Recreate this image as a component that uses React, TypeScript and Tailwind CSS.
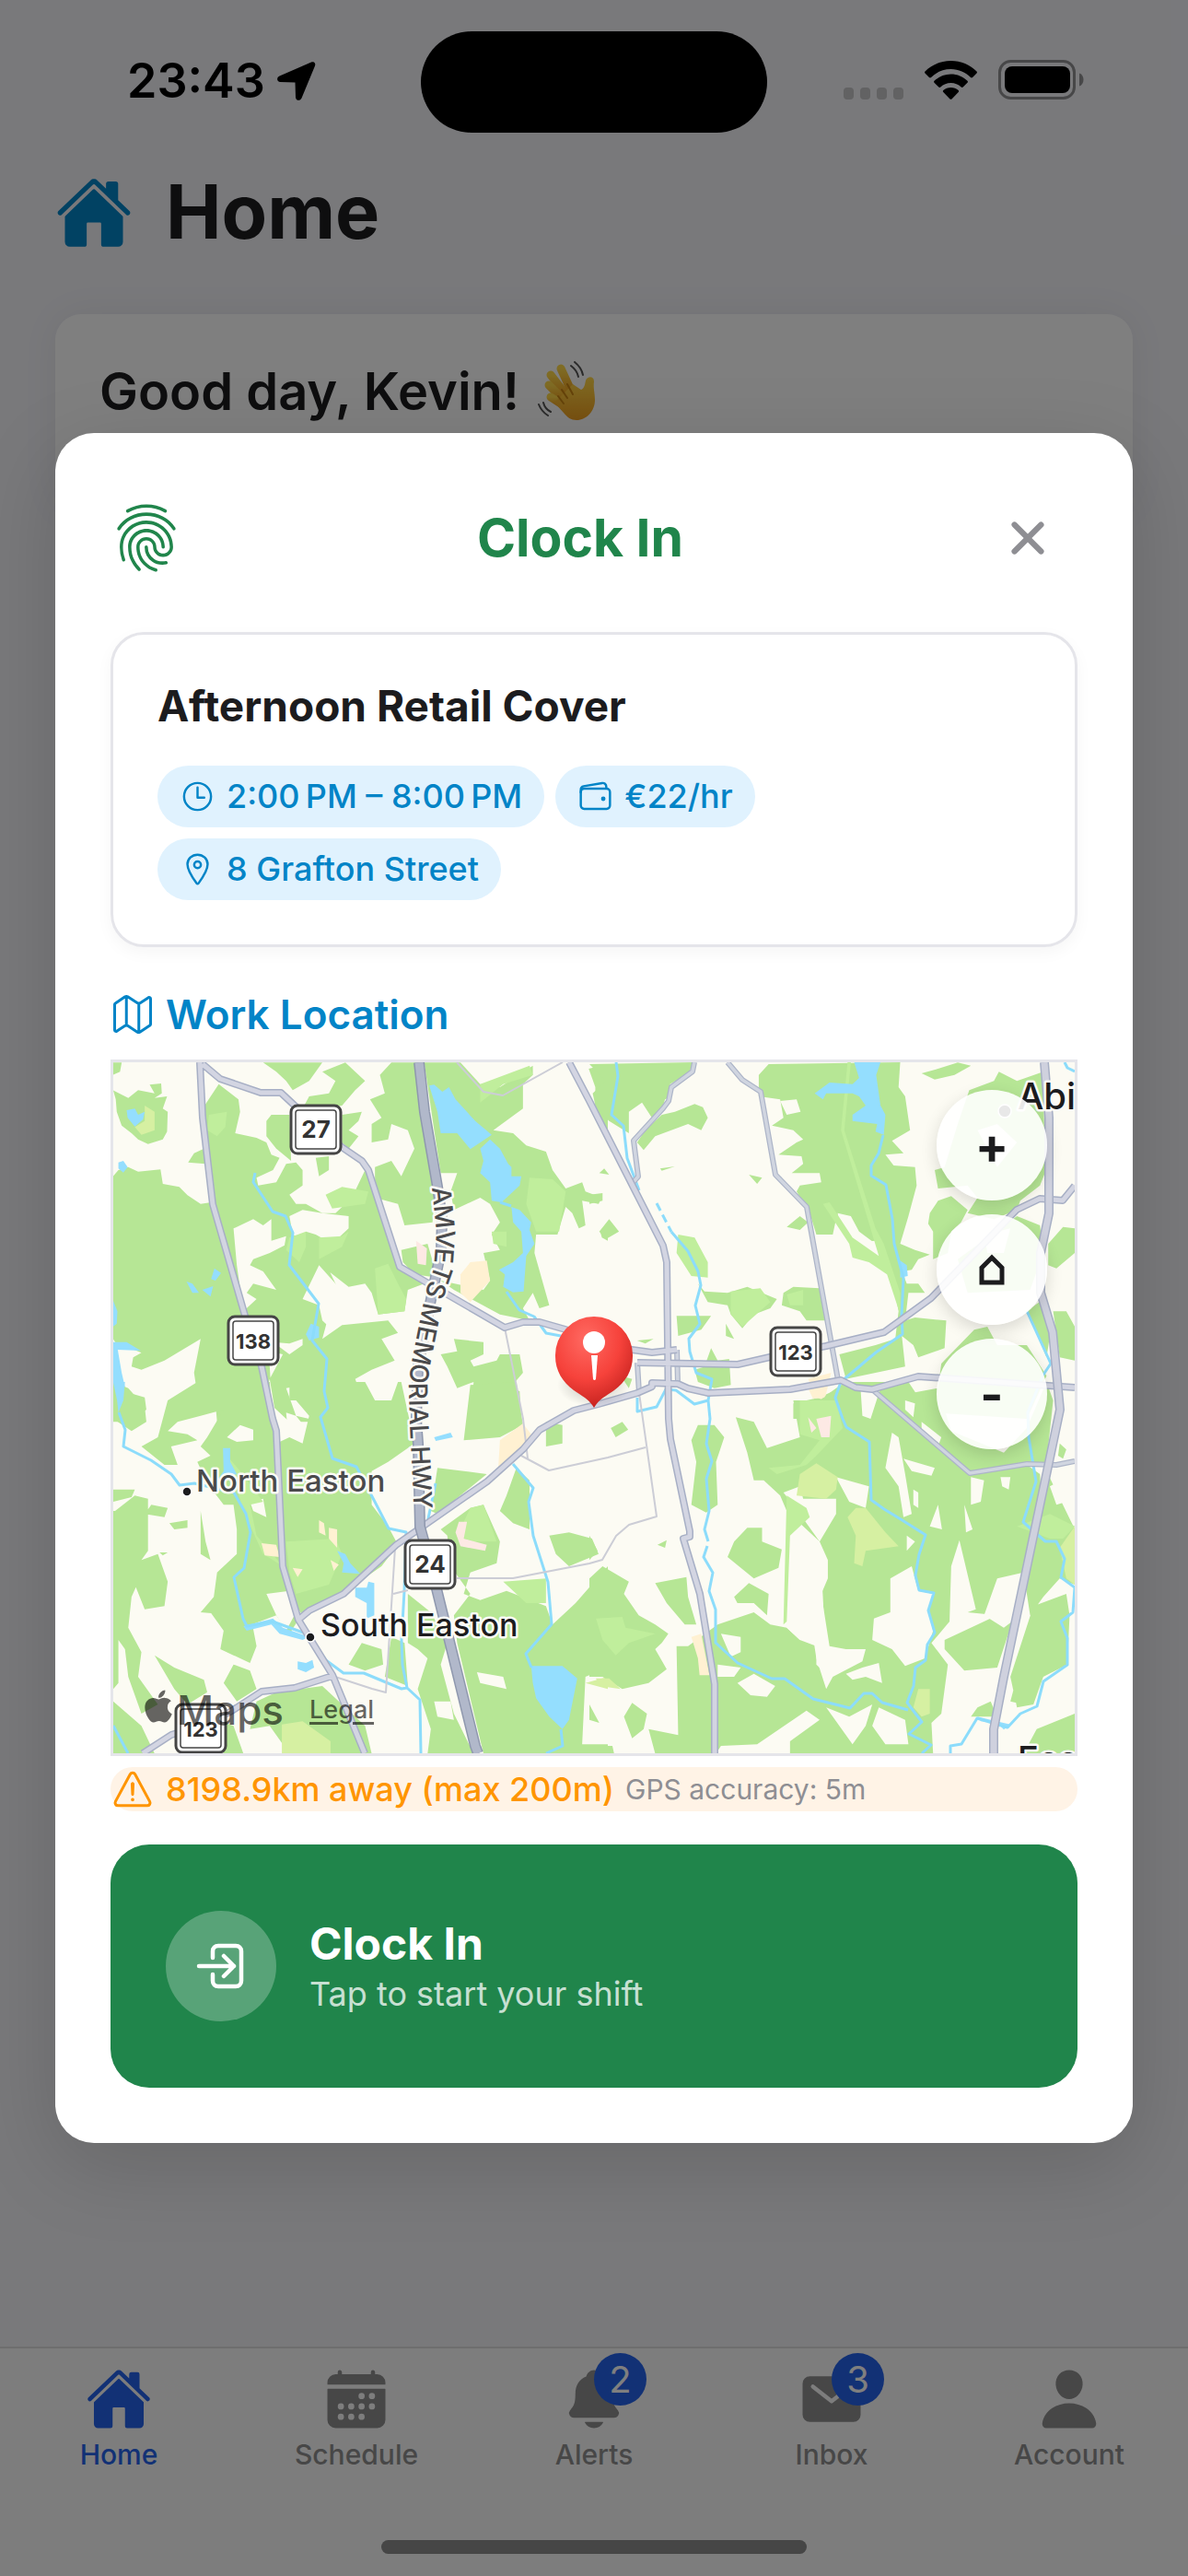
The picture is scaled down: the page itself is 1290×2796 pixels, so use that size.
import React from 'react';
import {
  IoCalendar,
  IoClose,
  IoFingerPrintOutline,
  IoHome,
  IoLocationOutline,
  IoMail,
  IoMapOutline,
  IoNotifications,
  IoPerson,
  IoTimeOutline,
  IoWalletOutline,
  IoWarningOutline,
} from 'react-icons/io5';
import { FaApple } from 'react-icons/fa';

const StatusBar = () => (
  <div className="grid grid-cols-3 h-[177px] items-start text-black">
    <div className="flex items-center gap-3 pl-[138px] pt-[56px]">
      <span className="text-[52px] leading-[64px] font-semibold">23:43</span>
      <svg className="w-[44px] h-[44px]" viewBox="0 0 44 44" fill="currentColor">
        <path d="M38 1.5c2.800-1.200 5.200 1.200 4 4L27.500 40.500c-1.500 3.500-6.300 3-6.500-.8L20.500 23.500 4.300 23c-3.800-.2-4.300-5-.8-6.500Z" />
      </svg>
    </div>
    <div className="mx-auto mt-[34px] w-[376px] h-[110px] rounded-full bg-black"></div>
    <div className="flex items-end justify-end gap-[23px] pr-[113px] pt-[65px]">
      <div className="flex gap-[7px]">
        {[0, 1, 2, 3].map((i) => (
          <div key={i} className="w-[11px] h-[13px] rounded-[4px] bg-[#c4c4c6]"></div>
        ))}
      </div>
      <svg className="w-[57px] h-[42px]" viewBox="0 0 57 42" fill="currentColor">
        <path d="M28.500 0C39.500 0 49.500 4.300 56.500 11.500c.6.600.6 1.400 0 2L52 18c-.6.600-1.400.6-2 0C44.500 12.500 37 9 28.500 9S12.500 12.500 7 18c-.6.600-1.400.6-2 0L.5 13.500c-.6-.6-.6-1.400 0-2C7.500 4.300 17.500 0 28.500 0Z" />
        <path d="M28.500 14.500c7 0 13.300 2.700 18 7.300.6.600.6 1.400 0 2l-4.800 4.700c-.6.600-1.400.6-2 0-3-2.900-7-4.500-11.200-4.500s-8.200 1.600-11.200 4.500c-.6.600-1.400.6-2 0l-4.800-4.700c-.6-.6-.6-1.400 0-2 4.700-4.600 11-7.300 18-7.300Z" />
        <path d="M28.500 29c3.100 0 6 1.200 8.200 3.100.6.600.6 1.300 0 1.900l-7.200 7.400c-.6.600-1.400.6-2 0L20.300 34c-.6-.6-.6-1.300 0-1.900 2.200-1.900 5.100-3.100 8.200-3.100Z" />
      </svg>
      <svg className="w-[93px] h-[43px]" viewBox="0 0 93 43" fill="none">
        <rect x="1.500" y="1.500" width="81" height="40" rx="12" stroke="#8f8f91" strokeWidth="3" />
        <rect x="7" y="7" width="71" height="29" rx="8" fill="black" />
        <path d="M88 14.500c3 1 4.500 4 4.500 7s-1.500 6-4.500 7Z" fill="#8f8f91" />
      </svg>
    </div>
  </div>
);

const WavingHand = () => (
  <svg className="w-[68px] h-[66px]" viewBox="0 0 68 66" fill="none">
    <defs>
      <linearGradient id="hand" x1="0" y1="0" x2="0" y2="1">
        <stop offset="0" stopColor="#ffd84a" />
        <stop offset="1" stopColor="#f0a020" />
      </linearGradient>
    </defs>
    <g stroke="url(#hand)" strokeWidth="9" strokeLinecap="round">
      <path d="M37 34 25 8" />
      <path d="M31 37 14 15" />
      <path d="M28 42 12 26" />
      <path d="M28 48 14 39" />
    </g>
    <path d="M23 40 38 25l9 6c4-2 4-6 5-10 2-5 9-5 9 1-1 8 1 12 1 20 0 12-9 22-20 22-6 0-10-3-14-8L18 45Z" fill="url(#hand)" />
    <path d="M32 25 38 36M26 31 32 40M22 38 28 46" stroke="#c98514" strokeWidth="2" strokeLinecap="round" />
    <path d="M36 5c4 3 7 7 8 12M40 1c5 4 8 9 9 14M6 45c1 4 4 8 8 10M1 47c2 5 5 9 10 12" stroke="#555" strokeWidth="2" strokeLinecap="round" />
  </svg>
);

/* Land cover is stored per map sheet, each in its own grid */
const sheets = [
  {
    transform: 'translate(-23 -113) scale(0.35714 0.33333)',
    woods:
      'M64 340 90 340 85 370 64 380ZM64 430 110 455 140 430 190 440 175 412 210 408 212 440 190 455 228 450 215 490 230 500 228 565 215 590 170 605 140 590 120 570 90 545 75 500 72 460Z' +
      'M64 710 80 690 110 680 140 695 208 688 215 735 265 745 290 772 330 800 362 795 385 870 430 1040 460 1165 500 1170 540 1330 550 1510 380 1510 375 1450 360 1440 390 1400 315 1385 310 1350 330 1240 220 1310 150 1340 120 1330 125 1300 150 1285 70 1250 64 1240Z' +
      'M292 665 310 635 340 620 345 670ZM342 480 385 410 445 460 450 500 435 570 500 585 530 600 545 640 570 650 550 690 500 715 505 740 560 730 590 670 620 665 640 690 640 740 600 770 620 800 650 800 700 830 740 830 790 780 830 690 870 780 900 880 940 1010 1010 1060 960 1080 950 1150 870 1160 850 1090 830 1060 780 1070 720 1020 700 970 740 1060 720 1160 700 1240 760 1195 900 1180 930 1220 880 1240 920 1310 850 1340 800 1370 810 1400 860 1400 920 1420 950 1440 940 1510 600 1510 540 1450 470 1470 540 1370 580 1290 500 1270 470 1150 400 900 360 760Z' +
      'M520 340 700 340 660 400 610 430 590 400 560 370ZM700 370 770 340 830 400 800 430 760 480 700 490 640 490 660 450 720 440 740 400ZM545 510 600 510 605 660 560 620 530 580 530 530ZM680 650 720 645 720 690 690 710ZM760 510 820 500 810 530 780 560 810 580 780 620 760 600Z' +
      'M910 340 985 340 1010 520 1045 740 1035 860 950 870 930 800 860 780 860 680 910 660 940 710 980 620 960 560 910 540 900 590 850 600 850 540 880 520 845 460 890 440 875 380ZM940 950 1020 930 1050 1040 980 1030 945 990Z' +
      'M1010 340 1120 340 1180 410 1240 420 1340 350 1340 380 1310 410 1310 490 1220 560 1280 570 1320 610 1380 630 1400 690 1440 750 1490 730 1500 760 1550 780 1540 800 1490 790 1500 870 1480 880 1460 830 1440 810 1415 900 1350 900 1345 960 1390 1130 1360 1140 1340 1090 1310 1140 1330 1180 1240 1160 1170 1120 1100 1080 1060 1050 1190 1080 1210 1050 1190 960 1240 950 1215 900 1240 860 1210 800 1180 780 1100 820 1090 760 1110 700 1060 700 1040 560Z' +
      'M1100 1240 1190 1250 1190 1290 1150 1310 1160 1330 1230 1310 1240 1290 1300 1290 1310 1350 1270 1400 1300 1410 1305 1510 1150 1510 1160 1380 1110 1400 1080 1330 1060 1290 1110 1280ZM1510 360 1568 345 1568 600 1530 480 1530 420ZM1545 890 1568 870 1568 920 1550 910ZM64 1400 160 1430 165 1470 120 1510 64 1510Z',
    clearings:
      'M430 880 490 850 520 870 545 850 545 920 590 905 585 935 540 960 490 980 480 1000 520 1020 560 1080 490 1060 470 1090 500 1110 460 1150 440 1000ZM600 840 640 820 700 830 780 840 780 880 730 930 680 900 650 890 640 920 610 900ZM640 1110 690 1000 740 1060 750 1110 720 1200 700 1180 690 1130ZM550 1250 600 1255 640 1240 640 1260 600 1290ZM460 1470 520 1440 540 1370 560 1500 500 1510ZM590 1400 640 1390 650 1430 690 1470 700 1510 620 1490Z',
    meadow:
      'M355 510 410 500 405 550 380 580 350 560ZM710 770 760 745 840 760 830 800 730 815ZM600 910 650 890 650 940 630 990 590 950ZM690 910 760 905 780 890 760 940 690 980ZM860 1010 900 995 930 1060 955 1110 950 1150 870 1160ZM1330 715 1400 720 1440 760 1420 890 1350 890 1320 800ZM1180 410 1330 350 1340 380 1250 410 1180 470ZM1215 890 1260 890 1260 940 1220 930Z',
    yellow: 'M160 480 190 500 190 560 150 575 130 550 160 530Z',
    sand: 'M1120 1030 1150 990 1200 985 1210 1050 1150 1120 1120 1090Z',
    pink: 'M985 920 1018 945 1015 1000 990 995Z',
    water:
      'M105 495 130 490 140 510 160 500 155 525 130 548 108 520ZM80 665 95 660 108 680 95 698 80 685ZM1025 415 1040 412 1065 435 1085 420 1105 460 1165 530 1215 575 1150 622 1110 570 1060 570 1050 500ZM1180 620 1210 590 1240 620 1265 670 1275 680 1275 710 1305 710 1300 740 1245 795 1215 790 1210 730 1180 700 1190 660ZM1275 810 1300 820 1335 860 1330 885 1345 930 1320 970 1312 1085 1280 1088 1250 1070 1255 1030 1237 1015 1280 990 1310 960 1305 890 1280 860ZM287 1053 305 1060 325 1090 305 1090ZM335 1080 368 1068 360 1102ZM362 1045 372 1010 392 1025 375 1050ZM64 1115 77 1150 75 1190 64 1200ZM64 1250 105 1250 148 1278 78 1275 90 1350 103 1410 98 1500 80 1490 82 1440 64 1420ZM665 1190 690 1200 690 1235 660 1245 650 1225Z',
  },
  {
    transform: 'translate(517 -113) scale(0.35714 0.33333)',
    woods:
      'M0 345 320 339 300 375 245 410 250 450 230 460 215 510 190 520 160 470 120 500 120 570 60 530 20 490 10 440 50 400ZM170 560 220 510 260 500 320 475 345 485 360 520 340 560 300 540 200 580 165 625 145 600Z' +
      'M545 345 945 339 940 420 960 450 975 560 920 595 955 635 900 640 925 675 990 680 995 740 970 840 945 930 990 950 1035 965 1000 980 980 1015 950 1020 965 1060 1000 1060 1020 1090 970 1090 960 1180 990 1170 1085 1180 1080 1270 1000 1300 985 1260 950 1230 960 1330 780 1370 760 1290 870 1260 930 1240 940 1150 920 1040 870 920 820 925 750 850 740 900 690 900 670 830 630 760 640 740 705 730 700 700 615 700 650 670 645 645 575 640 630 600 650 590 620 560 555 545 590 520 580 460 515 450 515 380Z' +
      'M1010 375 1060 360 1120 340 1160 350 1110 380 1050 395ZM1155 430 1230 400 1245 370 1300 400 1380 370 1385 700 1370 740 1310 790 1300 820 1230 850 1150 830 1180 780 1150 740 1060 750 1050 690 1080 680 1120 540ZM1035 830 1060 790 1100 775 1150 820 1130 860 1100 890 1090 960 1045 980 1045 890 1030 865ZM1300 840 1370 870 1380 960 1340 1080 1150 1090 1120 980ZM1395 930 1440 875 1476 880 1476 960 1420 1010 1395 1000ZM1330 1150 1380 1110 1400 1230 1390 1300ZM1410 1150 1450 1150 1476 1200 1476 1310 1430 1300Z' +
      'M330 1060 350 1085 420 1090 480 1070 570 1110 550 1140 500 1160 465 1205 430 1160 420 1130 360 1120ZM590 1090 620 1070 700 1075 720 1180 660 1180 640 1150 585 1130ZM265 1165 370 1165 340 1210 270 1230ZM0 770 40 765 40 790 0 800ZM30 890 60 850 90 890 50 915ZM485 705 525 715 510 735ZM600 875 640 840 665 860 640 885ZM215 685 260 678 220 692ZM415 1190 440 1240 415 1230ZM370 1270 390 1310 425 1305 430 1390 380 1400 330 1380 320 1340 350 1330ZM30 700 45 685 60 705ZM145 1245 195 1240 170 1255ZM95 1360 130 1370 120 1400Z' +
      'M620 1450 700 1430 760 1400 850 1400 950 1410 1060 1500 620 1500ZM1070 1320 1170 1210 1210 1200 1240 1260 1330 1260 1390 1360 1330 1500 1050 1480Z',
    clearings:
      'M755 830 795 840 820 890 870 930 875 965 830 965 760 880ZM580 465 630 460 642 500 600 510ZM830 1430 855 1430 860 1500 825 1500ZM1180 560 1240 540 1300 600 1240 680ZM1200 900 1280 880 1260 960 1210 960Z',
    meadow:
      'M785 339 795 339 775 560 870 880 895 930 945 1090 945 1160 905 1030 850 990 800 975 790 930 710 800 730 795 800 910 880 970 765 560 775 450ZM270 900 320 910 360 990 360 1040 310 1035 265 960ZM430 1085 520 1075 550 1120 465 1200 430 1160ZM600 1095 650 1080 650 1130 610 1130Z',
    yellow: '',
    sand: 'M665 1370 735 1350 715 1440 690 1430Z',
    pink: '',
    water:
      'M805 339 885 339 872 380 885 480 900 510 895 575 870 565 875 540 800 530 800 510 840 480 820 450 800 440 720 440 710 460 685 440 730 405 800 410 820 390ZM945 985 965 1000 968 1035 945 1040Z',
  },
  {
    transform: 'translate(-23 347) scale(0.35714 0.33333)',
    woods:
      'M64 0 110 20 160 80 165 130 120 160 64 120ZM64 350 130 350 120 375 64 390ZM70 420 130 370 170 380 170 550 150 580 145 640 120 700 110 800 150 880 140 960 200 1050 150 1080 110 960 100 870 80 840 80 980 64 1000 64 420Z' +
      'M230 60 320 0 540 0 560 250 580 600 630 770 600 820 560 760 460 800 440 760 330 750 370 700 380 620 440 560 440 480 430 400 400 400 350 330 320 260 360 240 330 210 350 180 400 90 330 110 260 130 230 160 290 170 320 190 240 210 260 270 220 270 150 210 200 180Z' +
      'M600 0 940 0 980 200 940 230 900 260 850 290 850 400 900 470 930 530 880 600 800 660 700 720 640 760 600 700 560 400 560 200 600 180 640 200 660 110 620 60 600 60Z' +
      'M180 400 230 410 220 440 160 430ZM235 460 290 450 290 475 250 480ZM330 420 345 520 360 580 330 560ZM205 555 230 555 215 565ZM150 580 200 560 230 650 220 730 160 740 130 660Z' +
      'M430 920 480 940 500 1000 440 1040 400 980ZM360 750 480 750 500 860 480 915 430 890 390 870 400 810ZM190 890 250 930 340 970 350 1010 290 1050 250 1000ZM500 1040 560 1010 700 990 830 1120 850 1210 600 1210 540 1120 480 1130ZM820 850 880 870 885 920 830 940 780 920ZM350 1090 430 1120 460 1210 400 1210ZM64 1040 150 1120 190 1210 64 1210Z' +
      'M1050 280 1130 290 1200 300 1050 430 1030 420ZM1060 480 1150 410 1190 400 1240 520 1230 590 1150 620 1130 690 1180 710 1260 680 1380 730 1400 790 1470 720 1568 600 1568 930 1500 960 1490 1180 1568 1180 1568 1210 1190 1210 1110 850 1100 760 1150 690 1090 600 1080 500ZM1290 280 1330 320 1330 480 1280 460 1240 420 1260 370ZM1150 10 1290 0 1310 140 1240 180 1130 190 1140 100ZM1390 500 1450 490 1520 510 1540 560 1450 600 1410 560ZM1380 130 1430 140 1430 200 1380 210Z' +
      'M960 690 1030 750 1080 850 1060 920 1100 1080 1160 1210 1020 1210 1030 1130 990 1000 1020 900 990 870 960 850ZM910 830 950 850 960 990 890 960Z',
    clearings:
      'M410 180 450 140 490 155 490 190 440 195ZM480 390 520 380 530 440 490 420ZM590 100 620 110 650 150 635 190 595 160ZM830 0 930 0 910 60 860 60ZM530 690 600 680 615 760 590 810 560 760ZM1040 1040 1090 1040 1100 1100 1050 1090ZM1170 945 1250 960 1260 1000 1180 980ZM800 650 880 640 920 700 860 690Z',
    meadow:
      'M590 520 740 510 760 560 720 660 620 690 600 620ZM410 240 450 290 520 390 480 400 500 500 580 600 520 560 460 420ZM1110 500 1150 410 1190 400 1230 520 1160 520ZM1250 650 1380 640 1380 720 1320 720Z',
    yellow: 'M577 1115 640 1105 725 1170 725 1210 577 1210ZM1500 980 1568 960 1568 1000Z',
    sand: 'M1240 190 1310 135 1335 170 1280 250 1235 280ZM515 525 560 530 570 570 525 565ZM690 450 705 460 710 500 690 490ZM720 475 745 480 745 540 720 510ZM610 605 640 610 625 635ZM725 580 750 595 735 615Z',
    pink: 'M1115 455 1140 455 1130 510 1200 530 1195 550 1120 535 1105 490Z',
    water:
      'M64 0 100 0 95 60 80 100 76 60ZM398 215 420 215 420 260 440 300 380 320 400 290ZM1040 180 1090 165 1097 180 1045 192ZM745 550 770 560 785 590 815 625 760 620 765 590ZM800 670 835 670 840 650 858 655 858 760 835 770 835 720 800 700ZM625 910 650 915 670 905 675 930 650 945 625 935ZM1335 925 1430 925 1475 965 1450 1100 1430 1130 1390 1090 1350 1030 1340 980ZM460 795 550 770 580 800 660 830 640 840 570 820 545 790 470 810Z',
  },
  {
    transform: 'translate(517 347) scale(0.35714 0.33333)',
    woods:
      'M0 640 40 600 120 650 105 690 150 760 200 790 240 820 220 850 200 870 235 935 180 980 100 1000 40 960 0 960ZM0 500 25 550 0 580ZM200 655 295 635 300 700 325 790 290 790 235 720ZM330 140 380 140 410 180 385 260 390 400 355 425 310 400 325 260 310 190Z' +
      'M445 115 500 130 540 215 640 180 620 60 700 60 750 20 780 0 970 0 1150 290 1330 270 1370 300 1380 480 1280 800 1240 930 1140 940 1080 870 1080 840 1140 810 1240 760 1150 750 1175 740 1125 515 1100 600 1095 780 1040 850 1090 920 1070 1080 1040 1110 1045 1210 610 1210 610 1170 700 1100 660 1070 510 1180 400 1185 385 1210 200 1210 180 1130 270 1150 265 860 300 860 390 790 500 750 550 790 600 800 640 840 690 860 690 920 720 950 730 870 715 820 710 700 700 520 600 420 580 370 530 320 500 320 480 230Z' +
      'M960 40 1060 20 1100 160 1260 230 1330 150 1390 0 1410 60 1390 260 1150 290ZM480 475 525 475 525 520 585 545 575 605 500 640 420 570 440 520ZM440 700 485 655 545 690 540 760 500 720 450 720ZM105 1090 130 1045 175 1080 165 1130 130 1160ZM0 1185 70 1185 75 1210 0 1210ZM0 1050 30 1110 0 1100ZM65 150 100 130 118 155 80 180ZM207 530 235 515 230 540Z' +
      'M1350 730 1450 690 1460 760 1453 920 1380 960 1350 1050 1300 1060 1280 960ZM1390 290 1476 480 1476 660 1430 640 1380 700 1340 760 1320 620ZM1430 200 1450 220 1440 250 1425 240ZM1220 1040 1240 1090 1160 1090 1180 1060ZM1320 1210 1360 1130 1476 1080 1476 1210ZM1290 1000 1320 1050 1280 1040Z',
    clearings:
      'M610 520 640 470 700 520 725 580 725 640 705 690 730 860 780 870 840 870 830 910 740 960 720 1000 690 900 680 830 640 840 600 800ZM590 360 640 340 650 380 750 380 750 430 700 520 660 460 620 400ZM750 310 850 340 840 410 790 390ZM920 165 940 180 960 300 980 430 955 440 940 340 900 280ZM955 250 1050 280 1040 305 980 290ZM985 350 1000 360 1000 410 985 400ZM1060 400 1072 480 1035 470ZM965 500 990 520 965 550ZM1140 400 1165 480 1145 490ZM1160 310 1200 320 1190 390 1160 400ZM1250 310 1280 310 1275 350 1255 340Z' +
      'M915 640 980 600 1000 680 1045 690 1030 750 1045 810 1020 900 960 925 920 870 860 840 865 770 915 750ZM1240 640 1320 620 1310 760 1260 800 1200 760ZM390 920 460 930 440 960 390 960ZM450 980 500 950 565 990 540 1025 490 1020ZM400 820 460 830 460 880 430 895ZM780 950 830 930 880 915 890 980 840 960 800 970ZM880 1060 960 1100 970 1180 900 1180 860 1120ZM720 1060 790 1090 860 1050 840 1120 800 1180 760 1120ZM825 30 885 20 855 120 830 110ZM1010 130 1070 180 1060 210 1010 170ZM960 60 990 70 985 115 960 90ZM1400 340 1435 320 1450 390 1420 400Z',
    meadow:
      'M600 370 660 410 670 440 610 500 600 780 590 790ZM1300 470 1400 430 1476 470 1440 510 1400 510ZM640 60 750 60 770 150 690 240 660 270 570 300 545 280 640 270 700 190 640 170ZM20 770 100 765 110 800 200 820 120 850 80 890 40 840Z',
    yellow:
      'M640 300 690 265 755 310 750 350 720 380 630 370ZM810 410 840 410 900 490 940 535 840 550 830 600 805 590 810 500 785 440ZM1000 1000 1035 1000 1035 1080 1010 1090 985 1060ZM1430 540 1476 470 1476 660 1450 640ZM20 965 60 965 95 1000 30 990Z',
    sand: 'M310 830 340 820 365 955 335 955 330 900ZM660 10 715 5 715 50 680 55Z',
    pink: 'M690 120 735 110 730 180 705 180ZM665 115 690 150 675 165Z',
    water: 'M1180 1090 1220 1100 1280 1115 1260 1132 1240 1110 1190 1105Z',
  },
];

const streams =
  'M154 120 152 130 173 162 187 167 195 185 191 220 223 262 216 302 232 322 229 357 233 375 225 385 238 430 264 439 284 477 299 506 318 510 316 574 313 627 314 654 319 679 333 692 334 750' +
  'M6 380 13 399 11 417 41 432 63 447 72 459 88 457 131 467 144 490 149 510 142 549 131 559 141 604 145 612 173 607 209 620 231 649 250 663 272 663 313 680 319 679' +
  'M434 436 456 462 451 477 456 514 472 564 476 610 448 642 454 657M486 724 488 742 470 750M427 249 441 269 457 276 470 294 486 297M420 152 432 156M350 457 341 500M0 720 16 750' +
  'M546 0 548 15 541 57 554 69 558 104 571 139M606 184 624 205 635 227 638 242 632 264 637 284 625 300 626 314 633 337 650 344 646 367 648 387 644 414 650 433 644 452 647 487 642 507 646 520M645 525 641 537 651 554 647 574 654 594 654 630 678 652 715 669 729 669 760 691 800 701 815 685 824 685 835 695 863 703' +
  'M646 367 631 371 611 356 600 355 590 374 569 379 569 364' +
  'M836 79 831 99 823 112 823 123 839 133 846 170 848 197 858 234 856 275 857 295 828 315 790 347 784 364 792 387 796 396 821 412 823 475 837 485 855 496 882 513 875 534 871 557 875 573 891 576 885 595 892 619 884 632 882 649 871 657 869 677 862 695 878 716 864 729 888 741 878 750' +
  'M992 270 1018 327 1010 339 993 380 994 407 1002 455 988 499 1012 520 1024 520 1033 539 1029 559 1044 570 1042 597 1029 607 1036 625 1036 654 1010 672 1003 699 985 707 971 722 938 712 921 740 909 742 909 750M1033 0 1036 6 1044 10';

const mainRoads =
  'M94 0 97 60 108 154 143 275 161 330 173 387 177 400 184 547 201 605 238 665 273 750' +
  'M97 2 116 18 160 33 182 33 197 47 248 92 270 107 277 117 311 222 425 288 445 282 463 282 491 290 563 312 585 315 612 312' +
  'M201 605 213 595 250 577 307 524 406 455 445 420 463 399 500 378 527 371 569 359 585 352 585 348 613 349 624 354 646 359 735 355 790 345 806 353 824 355 874 341 1044 353' +
  'M569 326 678 328 713 320 774 308 837 293 888 256 981 160 1006 148 1031 150 1044 134' +
  'M495 0 517 42 597 199 601 217 603 387 605 409 626 509 626 515 619 517 637 577 653 675 653 750' +
  'M32 750 63 730 95 720 127 705 161 683 197 679 238 666';

const minorRoads =
  'M631 0 629 10 606 27 603 42 597 50 565 85 570 124 563 132M667 0 683 19 703 32 719 122 753 157 787 345M824 355 930 446 992 436 1024 437 1044 433M569 326 571 359M612 312 613 349';

const eastRoad = 'M1011 0 1016 60 1016 164 1007 207 1007 250 1020 293 1028 377 967 667 956 724 956 750';

const highway =
  'M332 0 338 54 352 135 357 170 356 204 345 257 331 330 329 387 331 414 333 504 345 547 393 742 396 750';

const lanes =
  'M373 0 402 32 423 36 488 0M425 288 445 387 450 430M443 427 473 443 537 429 578 418M571 359 590 493 560 502 546 514 531 540 517 544 434 560 373 560M306 527 296 684 281 680 241 667M304 577 320 573';

const shields = [
  { id: '27', x: 220, y: 73, label: '27' },
  { id: '138', x: 152, y: 302, label: '138' },
  { id: '24', x: 344, y: 545, label: '24' },
  { id: '123-e', x: 741, y: 314, label: '123' },
  { id: '123-w', x: 95, y: 723, label: '123' },
];

const MapCanvas = () => (
  <svg className="block w-full h-full" viewBox="0 0 1044 750" preserveAspectRatio="xMidYMid slice" fontFamily="Inter, sans-serif">
    <defs>
      <radialGradient id="pin" cx="0.4" cy="0.25" r="0.8">
        <stop offset="0" stopColor="#ff6a62" />
        <stop offset="0.55" stopColor="#f6423b" />
        <stop offset="1" stopColor="#c01f1c" />
      </radialGradient>
      <radialGradient id="pin-shadow">
        <stop offset="0" stopColor="#000" stopOpacity="0.25" />
        <stop offset="1" stopColor="#000" stopOpacity="0" />
      </radialGradient>
      <path id="hwy-label" d="M346 136 351 184 348 224 341 244 335 270 323 330 321 354 322 394 324 434 328 520" />
    </defs>
    <rect width="1044" height="750" fill="#fcfbf3" />
    {sheets.map((s) => (
      <g key={s.transform} transform={s.transform}>
        <path d={s.woods} fill="#b6e695" />
        <path d={s.clearings} fill="#fcfbf3" />
        <path d={s.meadow} fill="#c0ee9c" />
        <path d={s.yellow} fill="#d6f0a2" />
        <path d={s.sand} fill="#fff1d2" />
        <path d={s.pink} fill="#fde9e4" />
        <path d={s.water} fill="#94defe" />
      </g>
    ))}
    <g fill="none" strokeLinejoin="round">
      <path d={streams} stroke="#8cdcfb" strokeWidth="3" />
      <path d="M590 153 606 184" stroke="#8cdcfb" strokeWidth="3" strokeDasharray="9 5" />
      <path d={lanes} stroke="#cccdd6" strokeWidth="2" />
      <path d={minorRoads} stroke="#adb5c8" strokeWidth="6" />
      <path d={minorRoads} stroke="#d0d5e0" strokeWidth="3.500" />
      <path d={mainRoads} stroke="#a7afc5" strokeWidth="8" />
      <path d={mainRoads} stroke="#d3d5e2" strokeWidth="5" />
      <path d={eastRoad} stroke="#a7afc5" strokeWidth="10" />
      <path d={eastRoad} stroke="#cfd1de" strokeWidth="7" />
      <path d={highway} stroke="#8f98ae" strokeWidth="12" />
      <path d={highway} stroke="#b1b8ca" strokeWidth="9" />
    </g>
    {shields.map((s) => (
      <g key={s.id}>
        <rect x={s.x - 27} y={s.y - 26} width="54" height="52" rx="7" fill="white" stroke="#454545" strokeWidth="3" />
        <rect x={s.x - 22} y={s.y - 21} width="44" height="42" rx="3" fill="none" stroke="#454545" strokeWidth="1.500" />
        <text x={s.x} y={s.y + 9} textAnchor="middle" fontSize={s.label.length > 2 ? 22 : 26} fontWeight="700" fill="#333">{s.label}</text>
      </g>
    ))}
    <g stroke="#fbfbf6" strokeWidth="5" strokeLinejoin="round" paintOrder="stroke" fontWeight="500">
      <text fontSize="28" fill="#4a4a4c">
        <textPath href="#hwy-label">AMVETS MEMORIAL HWY</textPath>
      </text>
      <text x="90" y="466" fontSize="33" fill="#4a4a4c">North Easton</text>
      <text x="225" y="623" fontSize="34" fill="#1c1c1e">South Easton</text>
      <text x="982" y="51" fontSize="40" fill="#1c1c1e">Abington</text>
      <text x="982" y="770" fontSize="38" fill="#1c1c1e">East Bridgewater</text>
    </g>
    <g fill="#1c1c1e" stroke="white" strokeWidth="1.500">
      <circle cx="80" cy="466" r="5" />
      <circle cx="214" cy="624" r="5" />
      <circle cx="968" cy="53" r="7" />
    </g>
    <ellipse cx="522" cy="350" rx="40" ry="24" fill="url(#pin-shadow)" />
    <path d="M522 276a42 42 0 0 1 42 43c0 16-8 28-20 37-10 7-17 10-22 19-5-9-12-12-22-19-12-9-20-21-20-37a42 42 0 0 1 42-43Z" fill="url(#pin)" />
    <circle cx="522" cy="304" r="12" fill="white" />
    <path d="M519 318h7l-2 26q-1.500 2-3 0Z" fill="white" />
  </svg>
);

const WorkMap = () => (
  <div className="relative h-[756px] border-[3px] border-[#e5e5ea] overflow-hidden">
    <MapCanvas />
    <div className="absolute left-[29px] bottom-[20px] flex items-center text-black/60">
      <FaApple size={40} className="mb-2" />
      <span className="text-[44px] leading-[54px] font-medium">Maps</span>
      <a href="#legal" className="ml-7 text-[27px] font-medium underline decoration-[3px] underline-offset-4">Legal</a>
    </div>
    <div className="absolute top-[30px] right-[30px] flex flex-col gap-[15px] text-[#1c1c1e] text-[54px] font-bold">
      <button aria-label="Zoom in" className="size-[120px] rounded-full bg-white/90 shadow-[0_6px_18px_rgba(0,0,0,0.14)]">+</button>
      <button aria-label="Recentre" className="size-[120px] rounded-full bg-white/90 shadow-[0_6px_18px_rgba(0,0,0,0.14)] flex items-center justify-center">
        <svg className="w-[28px] h-[34px]" viewBox="0 0 28 34" fill="none" stroke="currentColor" strokeWidth="5">
          <path d="M3 31V15L14 4l11 11v16Z" />
        </svg>
      </button>
      <button aria-label="Zoom out" className="size-[120px] rounded-full bg-white/90 shadow-[0_6px_18px_rgba(0,0,0,0.14)]">-</button>
    </div>
  </div>
);

const chips = [
  { icon: IoTimeOutline, text: '2:00\u202fPM – 8:00\u202fPM' },
  { icon: IoWalletOutline, text: '€22/hr' },
  { icon: IoLocationOutline, text: '8 Grafton Street' },
];

const EnterIcon = () => (
  <svg className="w-[54px] h-[50px]" viewBox="0 0 54 50" fill="none" stroke="white" strokeWidth="4.500" strokeLinecap="round" strokeLinejoin="round">
    <path d="M18 16V9c0-3.500 2.500-6 6-6h19c3.500 0 6 2.500 6 6v32c0 3.500-2.500 6-6 6H24c-3.500 0-6-2.500-6-6v-7" />
    <path d="M3 25h38M30 14l11 11-11 11" />
  </svg>
);

const ClockInModal = () => (
  <div role="dialog" aria-labelledby="clock-in-title" className="w-full bg-white rounded-[42px] p-[60px] shadow-[0_24px_90px_rgba(0,0,0,0.15)]">
    <div className="flex items-center justify-between mb-12">
      <IoFingerPrintOutline size={78} className="text-[#20854b]" />
      <h2 id="clock-in-title" className="text-[57px] font-bold text-[#20854b]">Clock In</h2>
      <button aria-label="Close" className="size-[108px] flex items-center justify-center text-[#8e8e93]">
        <IoClose size={66} />
      </button>
    </div>

    <div className="border-[3px] border-[#e5e5ea] rounded-[36px] p-12 mb-12 shadow-[0_6px_18px_rgba(0,0,0,0.04)]">
      <h3 className="text-[46px] leading-[58px] font-bold text-[#1c1c1e] mb-9">Afternoon Retail Cover</h3>
      <div className="flex flex-wrap gap-3">
        {chips.map(({ icon: Icon, text }) => (
          <div key={text} className="flex items-center gap-3 bg-[#e0f2fe] text-[#0284c7] rounded-full px-6 py-3">
            <Icon size={39} />
            <span className="text-[36px] leading-[43px] font-medium">{text}</span>
          </div>
        ))}
      </div>
    </div>

    <div className="flex items-center gap-3 mb-6 text-[#0284c7]">
      <IoMapOutline size={48} />
      <h3 className="text-[44px] leading-[50px] font-semibold">Work Location</h3>
    </div>
    <WorkMap />

    <div className="flex items-center gap-3 mt-3 h-12 rounded-full bg-[#fff3e6]">
      <IoWarningOutline size={48} className="text-[#ff9500]" />
      <span className="text-[36px] font-medium text-[#ff9500]">8198.9km away (max 200m)</span>
      <span className="text-[30px] text-[#8e8e93]">GPS accuracy: 5m</span>
    </div>

    <button className="mt-9 w-full h-[264px] rounded-[42px] bg-[#20854b] px-[60px] flex items-center gap-9 text-left text-white">
      <span className="size-[120px] rounded-full bg-white/25 flex items-center justify-center">
        <EnterIcon />
      </span>
      <span className="flex flex-col">
        <span className="text-[48px] leading-[60px] font-bold">Clock In</span>
        <span className="text-[36px] leading-[48px] text-white/75">Tap to start your shift</span>
      </span>
    </button>
  </div>
);

const tabs = [
  { name: 'Home', icon: IoHome, active: true },
  { name: 'Schedule', icon: IoCalendar },
  { name: 'Alerts', icon: IoNotifications, badge: 2 },
  { name: 'Inbox', icon: IoMail, badge: 3 },
  { name: 'Account', icon: IoPerson },
];

const TabBar = () => (
  <nav className="h-[249px] border-t-[2px] border-[#dcdcdc] bg-[#fafafa] flex flex-col justify-between pb-6">
    <div className="grid grid-cols-5 pt-[19px]">
      {tabs.map(({ name, icon: Icon, active, badge }) => (
        <a key={name} href={`#${name.toLowerCase()}`} className={active ? 'flex flex-col items-center text-[#2563eb]' : 'flex flex-col items-center text-[#8e8e8e]'}>
          <span className="relative">
            <Icon size={72} />
            {badge && (
              <span className="absolute left-1/2 -top-[14px] size-[57px] rounded-full bg-[#2563eb] text-white text-[40px] leading-[57px] text-center">{badge}</span>
            )}
          </span>
          <span className="mt-1 text-[30px] leading-[40px] font-medium">{name}</span>
        </a>
      ))}
    </div>
    <div className="mx-auto w-[462px] h-[15px] rounded-full bg-[#8c8c8c]"></div>
  </nav>
);

const App: React.FC = () => {
  return (
    <div className="relative min-h-screen flex flex-col bg-[#f2f2f7] font-[Inter,sans-serif]">
      <StatusBar />
      <main className="grow px-[60px]">
        <div className="flex items-center gap-9 h-[108px]">
          <IoHome size={84} className="text-[#0284c7]" />
          <h1 className="text-[81px] font-bold text-[#1c1c1e]">Home</h1>
        </div>
        <div className="mt-14 rounded-[28px] bg-white p-12 pb-24 shadow-[0_0_40px_rgba(0,0,0,0.06)]">
          <p className="flex items-center gap-5 text-[56px] leading-[72px] font-semibold text-[#1c1c1e]">
            Good day, Kevin!
            <WavingHand />
          </p>
        </div>
      </main>
      <TabBar />
      <div className="absolute inset-0 bg-black/50 flex items-center justify-center px-[60px]">
        <ClockInModal />
      </div>
    </div>
  );
};

export default App;
